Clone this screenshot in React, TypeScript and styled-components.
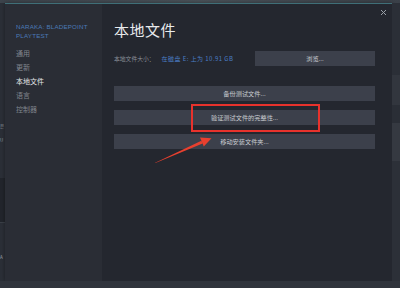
import React from 'react';
import styled, { createGlobalStyle } from 'styled-components';

const Global = createGlobalStyle`
  html, body { margin: 0; padding: 0; background: #2d3139; }
  body {
    width: 400px; height: 288px; overflow: hidden;
    font-family: "Noto Sans CJK SC", "Noto Sans", sans-serif;
  }
`;

const Screen = styled.div`
  position: relative;
  width: 400px;
  height: 288px;
  display: flex;
  flex-direction: column;
  background: #2e323a;
  overflow: hidden;
`;

const TopBlur = styled.div`
  height: 3px;
  background: linear-gradient(90deg, #3c434b, #4a5259 50%, #3a4048);
`;

const Middle = styled.div`
  display: flex;
  height: 278px;
`;

const LeftEdge = styled.div`
  width: 5px;
  display: flex;
  flex-direction: column;
  background: #2b2f37;
  color: #9aa0a8;
  font-family: "Noto Sans CJK KR", "Liberation Sans", sans-serif;
  font-size: 4.5px;
  line-height: 14px;
  padding-top: 116px;
`;

const EdgeGlyph = styled.span<{ $gap?: number }>`
  display: block;
  white-space: nowrap;
  margin-top: ${p => p.$gap ?? 0}px;
`;

const EdgeBlock = styled.div`
  height: 44px;
  margin-top: 31px;
  background: #22252c;
  border-bottom: 1px solid #3a3f47;
`;

const Dialog = styled.div`
  width: 387px;
  display: flex;
  border-top: 1px solid #3f6f78;
  box-shadow: 0 0 4px rgba(0, 0, 0, 0.4);
`;

const Sidebar = styled.div`
  width: 97px;
  background: #2a2d35;
  padding: 18px 0 0 11px;
  box-sizing: border-box;
  display: flex;
  flex-direction: column;
`;

const GameTitle = styled.div`
  font-family: "Liberation Sans", Arial, sans-serif;
  font-size: 6.2px;
  line-height: 9px;
  color: #4a7ab8;
  letter-spacing: 0.2px;
  margin-bottom: 6px;
`;

const NavItem = styled.div<{ $active?: boolean }>`
  font-size: 7px;
  line-height: 14px;
  color: ${p => (p.$active ? '#e4e6e9' : '#80858d')};
`;

const Main = styled.div`
  flex: 1;
  background: #24272f;
  padding: 17px 17px 0 12px;
  display: flex;
  flex-direction: column;
  position: relative;
`;

const Close = styled.svg`
  position: absolute;
  top: 5px;
  right: 5px;
  width: 7px;
  height: 7px;
`;

const Title = styled.div`
  font-size: 15px;
  line-height: 18px;
  color: #e8eaec;
  letter-spacing: 0.5px;
`;

const SizeRow = styled.div`
  display: flex;
  align-items: center;
  margin-top: 12px;
  height: 15px;
`;

const SizeLabel = styled.span`
  font-size: 5.8px;
  color: #8a8f97;
`;

const SizeValue = styled.span`
  font-size: 6px;
  letter-spacing: 0.45px;
  color: #4a7dc4;
  margin-left: 7px;
`;

const Button = styled.div<{ $width?: number }>`
  height: 15px;
  ${p => (p.$width ? `width: ${p.$width}px;` : '')}
  background: #3c404b;
  color: #c9ccd1;
  font-size: 6.2px;
  display: flex;
  align-items: center;
  justify-content: center;
`;

const BrowseButton = styled(Button)`
  margin-left: auto;
`;

const ActionList = styled.div`
  display: flex;
  flex-direction: column;
  gap: 9px;
  margin-top: 20px;
`;

const RightEdge = styled.div`
  flex: 1;
  display: flex;
  flex-direction: column;
  background: #2a2e36;
`;

const EdgeShade = styled.div<{ $h: number; $c: string }>`
  height: ${p => p.$h}px;
  background: ${p => p.$c};
`;

const BottomBand = styled.div`
  flex: 1;
  background: #30343c;
`;

const Highlight = styled.div`
  position: absolute;
  left: 191px;
  top: 104px;
  width: 129px;
  height: 28px;
  box-sizing: border-box;
  border: 2px solid #e8322c;
`;

const Arrow = styled.svg`
  position: absolute;
  left: 0;
  top: 0;
  width: 400px;
  height: 288px;
  pointer-events: none;
`;

export default function App() {
  return (
    <>
      <Global />
      <Screen>
        <TopBlur />
        <Middle>
          <LeftEdge>
            <EdgeGlyph>은</EdgeGlyph>
            <EdgeGlyph>U</EdgeGlyph>
            <EdgeBlock />
            <EdgeGlyph $gap={27}>A</EdgeGlyph>
          </LeftEdge>
          <Dialog>
            <Sidebar>
              <GameTitle>
                NARAKA: BLADEPOINT
                <br />
                PLAYTEST
              </GameTitle>
              <NavItem>通用</NavItem>
              <NavItem>更新</NavItem>
              <NavItem $active>本地文件</NavItem>
              <NavItem>语言</NavItem>
              <NavItem>控制器</NavItem>
            </Sidebar>
            <Main>
              <Close viewBox="0 0 7 7">
                <path d="M1 1 L6 6 M6 1 L1 6" stroke="#9aa0a8" strokeWidth="1" />
              </Close>
              <Title>本地文件</Title>
              <SizeRow>
                <SizeLabel>本地文件大小：</SizeLabel>
                <SizeValue>在磁盘 E: 上为 10.91 GB</SizeValue>
                <BrowseButton $width={120}>浏览...</BrowseButton>
              </SizeRow>
              <ActionList>
                <Button>备份测试文件...</Button>
                <Button>验证测试文件的完整性...</Button>
                <Button>移动安装文件夹...</Button>
              </ActionList>
            </Main>
          </Dialog>
          <RightEdge>
            <EdgeShade $h={72} $c="#2b2f37" />
            <EdgeShade $h={30} $c="#32363e" />
            <EdgeShade $h={18} $c="#2a2e36" />
            <EdgeShade $h={38} $c="#353941" />
            <EdgeShade $h={120} $c="#2c3038" />
          </RightEdge>
        </Middle>
        <BottomBand />
        <Highlight />
        <Arrow viewBox="0 0 400 288">
          <polygon
            points="154.8,163.3 155.2,162.7 201.4,140.8 202.6,143.4"
            fill="#e8402f"
          />
          <polygon
            points="211.5,138.2 200.0,137.6 203.8,146.4"
            fill="#e8402f"
          />
        </Arrow>
      </Screen>
    </>
  );
}
